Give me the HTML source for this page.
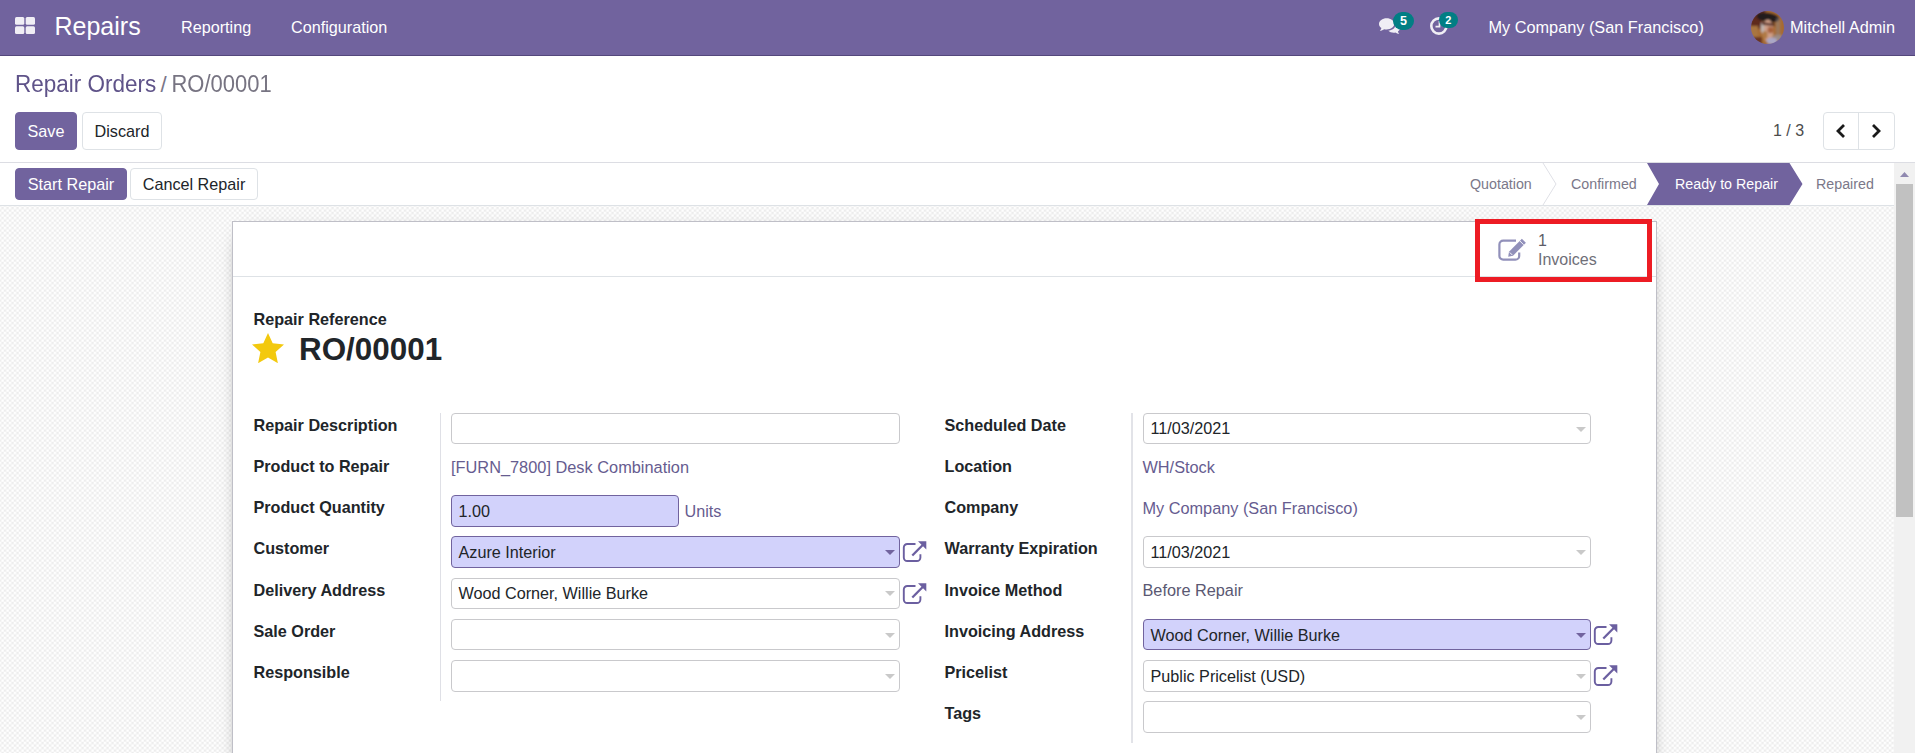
<!DOCTYPE html>
<html>
<head>
<meta charset="utf-8">
<title>Odoo - RO/00001</title>
<style>
*{box-sizing:border-box;margin:0;padding:0}
html,body{width:1915px;height:753px;overflow:hidden;background:#fff}
body{font-family:"Liberation Sans",sans-serif;font-size:16px;color:#212529;position:relative}
.abs{position:absolute}
.t{position:absolute;white-space:nowrap;line-height:1}
/* navbar */
#nav{left:0;top:0;width:1915px;height:56px;background:#71639e;border-bottom:1px solid #54477c}
#nav .t{color:#fff}
.badge{position:absolute;background:#017e84;color:#fff;font-weight:bold;font-size:12px;border-radius:9px;text-align:center;line-height:18px;height:18px}
/* control panel */
.btn{position:absolute;border-radius:4px;font-size:16.2px;text-align:center;white-space:nowrap}
.btn-p{background:#71639e;color:#fff;border:1px solid #71639e}
.btn-s{background:#fff;color:#212529;border:1px solid #dee2e6}
/* content */
#content{left:0;top:163px;width:1894px;height:590px;overflow:hidden;
 background:#f5f5f5}
#statusbar{left:0;top:0;width:1894px;height:43px;background:#fff;border-bottom:1px solid #dee2e6}
#sheet{left:232px;top:58px;width:1425px;height:1600px;background:#fff;border:1px solid #bfbfc7;box-shadow:0 5px 20px -14px #000}
.lbl{position:absolute;font-weight:bold;font-size:16.2px;color:#212529;white-space:nowrap;line-height:1}
.inp{position:absolute;height:31px;border:1px solid #c9c9cc;border-radius:4px;background:#fff;font-size:16.2px;line-height:29px;padding-left:6.5px;color:#212529;white-space:nowrap}
.req{background:#d2d2fb;border-color:#71639e}
.h32{height:32px;line-height:30px}
.val{position:absolute;font-size:16.2px;white-space:nowrap;line-height:1;color:#665c90}
.caret{position:absolute;width:0;height:0;border-left:5px solid transparent;border-right:5px solid transparent;border-top:5px solid #c9c9c9}
.caret.p{border-top-color:#71639e}
.vsep{position:absolute;width:1px;background:#dfe0e6}
</style>
</head>
<body>

<!-- NAVBAR -->
<div id="nav" class="abs">
  <svg class="abs" style="left:15px;top:17px" width="20" height="17" viewBox="0 0 20 17"><g fill="#f0eef5"><rect x="0" y="0" width="9.3" height="7.8" rx="1.5"/><rect x="10.7" y="0" width="9.3" height="7.8" rx="1.5"/><rect x="0" y="9.2" width="9.3" height="7.8" rx="1.5"/><rect x="10.7" y="9.2" width="9.3" height="7.8" rx="1.5"/></g></svg>
  <div class="t" style="left:54.5px;top:14px;font-size:25px">Repairs</div>
  <div class="t" style="left:181px;top:19px;font-size:16.2px">Reporting</div>
  <div class="t" style="left:291px;top:19px;font-size:16.2px">Configuration</div>

  <!-- comments icon -->
  <svg class="abs" style="left:1379px;top:18px" width="21" height="17.500" viewBox="0 0 22 18"><g fill="#f0eef5"><path d="M8 0C3.6 0 0 2.7 0 6c0 1.7 1 3.2 2.500 4.300C2.300 11.500 1.600 12.500 .8 13.200c1.800-.1 3.500-.8 4.700-1.700.8.200 1.600.300 2.500.300 4.400 0 8-2.600 8-5.900S12.400 0 8 0z"/><path d="M17.300 7.300c-.5 3-3.500 5.300-7.500 5.800 1.300 1.300 3.300 2.100 5.600 2.100.7 0 1.300-.1 1.900-.2 1 .8 2.400 1.400 3.900 1.500-.7-.6-1.200-1.400-1.400-2.400C21.200 13.200 22 12 22 10.700c0-1.600-1.900-3-4.700-3.400z"/></g></svg>
  <div class="badge" style="left:1393px;top:11.500px;width:21px;height:18.500px;line-height:18.500px;font-size:12.500px">5</div>
  <!-- activity clock -->
  <svg class="abs" style="left:1429px;top:16px" width="20" height="20" viewBox="0 0 20 20"><circle cx="9.900" cy="10" r="7.600" fill="none" stroke="#f0eef5" stroke-width="2.600"/><path d="M10.500 5v5.600h-4" fill="none" stroke="#f0eef5" stroke-width="1.700"/></svg>
  <div class="badge" style="left:1438.500px;top:11.500px;width:19.700px;height:16.500px;line-height:16.500px;font-size:11px">2</div>

  <div class="t" style="left:1488.5px;top:19px;font-size:16.3px">My Company (San Francisco)</div>
  <!-- avatar -->
  <svg class="abs" style="left:1751px;top:10.500px" width="33" height="33" viewBox="0 0 33 33">
    <defs><clipPath id="av"><circle cx="16.500" cy="16.500" r="16.500"/></clipPath><filter id="avb" x="-10%" y="-10%" width="120%" height="120%"><feGaussianBlur stdDeviation="1"/></filter></defs>
    <g clip-path="url(#av)"><g filter="url(#avb)">
      <rect x="-3" y="-3" width="39" height="39" fill="#a66a32"/>
      <path d="M-2 -2h17l-6 20H-2z" fill="#5e2a1c"/>
      <rect x="-2" y="15" width="9" height="12" fill="#a87540"/>
      <rect x="2" y="26" width="9" height="8" fill="#6b3520"/>
      <ellipse cx="17" cy="6.500" rx="11.500" ry="4.800" transform="rotate(8 17 6.500)" fill="#231a1b"/>
      <ellipse cx="16.800" cy="19.500" rx="5.600" ry="11" fill="#cf9f88"/>
      <ellipse cx="11.500" cy="16.500" rx="1.800" ry="5.500" fill="#bdb3ae"/>
      <path d="M11 11.200l13 1.500v2.300l-13-1.300z" fill="#4a2320"/>
      <ellipse cx="19.500" cy="19" rx="3" ry="3.200" fill="#a8623c"/>
      <ellipse cx="14" cy="24" rx="2.500" ry="4" fill="#b07a45"/>
      <rect x="25" y="7" width="4" height="22" fill="#8c8a8e" opacity=".45"/>
      <rect x="22" y="24" width="9" height="5" fill="#9b9aa5" opacity=".6"/>
      <ellipse cx="21" cy="30" rx="5.500" ry="3.500" fill="#aaa7c6"/>
    </g></g>
  </svg>
  <div class="t" style="left:1790px;top:19px;font-size:16.3px">Mitchell Admin</div>
</div>

<!-- CONTROL PANEL -->
<div class="t" style="left:15px;top:74px;font-size:22.5px;color:#5f5389;transform:scaleY(1.05);transform-origin:0 84.600%">Repair Orders</div>
<div class="t" style="left:160.500px;top:73.500px;font-size:22.2px;color:#7a7688">/</div>
<div class="t" style="left:171.400px;top:73.500px;font-size:22px;color:#777482;transform:scaleY(1.06);transform-origin:0 84.600%">RO/00001</div>
<div class="btn btn-p" style="left:15px;top:112px;width:62px;height:38px;line-height:37px">Save</div>
<div class="btn btn-s" style="left:82px;top:112px;width:80px;height:38px;line-height:37px">Discard</div>
<div class="t" style="left:1773px;top:123px;font-size:16px;color:#4c4c4c">1 / 3</div>
<div class="abs" style="left:1823px;top:112px;width:72px;height:38px;border:1px solid #dee2e6;border-radius:4px;background:#fff"></div>
<div class="abs" style="left:1858px;top:113px;width:1px;height:36px;background:#dee2e6"></div>
<svg class="abs" style="left:1834px;top:123px" width="14" height="16" viewBox="0 0 14 16"><path d="M10 2L4 8l6 6" fill="none" stroke="#1a1a1a" stroke-width="2.800"/></svg>
<svg class="abs" style="left:1869px;top:123px" width="14" height="16" viewBox="0 0 14 16"><path d="M4 2l6 6-6 6" fill="none" stroke="#1a1a1a" stroke-width="2.800"/></svg>
<div class="abs" style="left:0;top:162px;width:1915px;height:1px;background:#dcdde3"></div>

<!-- SCROLLBAR -->
<div class="abs" style="left:1894px;top:163px;width:21px;height:590px;background:#f1f1f1"></div>
<div class="abs" style="left:1896px;top:184px;width:17px;height:333px;background:#c1c1c1"></div>
<svg class="abs" style="left:1900px;top:172px" width="9" height="5" viewBox="0 0 9 5"><path d="M0 5L4.500 0 9 5z" fill="#9089b0"/></svg>

<!-- CONTENT -->
<div id="content" class="abs">
  <svg class="abs" style="left:0;top:0" width="1894" height="590"><defs><pattern id="chk" width="5" height="5" patternUnits="userSpaceOnUse" patternTransform="translate(3.75 3.75)"><rect width="5" height="5" fill="#ededed"/><rect x="0" y="0" width="2.500" height="2.500" fill="#fff"/><rect x="2.500" y="2.500" width="2.500" height="2.500" fill="#fff"/></pattern></defs><rect width="1894" height="590" fill="url(#chk)"/></svg>
  <div id="statusbar" class="abs">
    <div class="btn btn-p" style="left:15px;top:5px;width:112px;height:32px;line-height:31px">Start Repair</div>
    <div class="btn btn-s" style="left:130px;top:5px;width:128px;height:32px;line-height:31px">Cancel Repair</div>
    <svg class="abs" style="left:1440px;top:0" width="454" height="42" viewBox="0 0 454 42">
      <path d="M103 0l13 21-13 21" fill="none" stroke="#dfe0e6" stroke-width="1"/>
      <path d="M207 0h142.500l13 21-13 21H207l12-21z" fill="#71639e"/>
    </svg>
    <div class="t" style="left:1470px;top:14px;font-size:14.25px;color:#7b7889">Quotation</div>
    <div class="t" style="left:1571px;top:14px;font-size:14.25px;color:#7b7889">Confirmed</div>
    <div class="t" style="left:1675px;top:14px;font-size:14.25px;color:#fff">Ready to Repair</div>
    <div class="t" style="left:1816px;top:14px;font-size:14.25px;color:#7b7889">Repaired</div>
  </div>

  <div id="sheet" class="abs"></div>
</div>

<!-- SHEET CONTENT (absolute page coords) -->
<div class="abs" style="left:233px;top:276px;width:1423px;height:1px;background:#dee2e6"></div>
<!-- red highlight -->
<div class="abs" style="left:1475px;top:219px;width:177px;height:63px;border:5px solid #ed1c24"></div>
<!-- invoice button -->
<svg class="abs" style="left:1498px;top:238px" width="29" height="24" viewBox="0 0 29 24">
  <path d="M18 2.700H5.200A3.800 3.800 0 0 0 1.400 6.500v11.400a3.800 3.800 0 0 0 3.800 3.800h12.200a3.800 3.800 0 0 0 3.800-3.800V14.500" fill="none" stroke="#9190ba" stroke-width="2.200"/>
  <path d="M10.200 18.700l.8-5 12.900-12.900 4 4L15 17.700z" fill="#9190ba"/>
  <path d="M11.700 14.400l2.600 2.600" stroke="#fff" stroke-width=".9"/>
  <path d="M21.700 2.800l4 4" stroke="#fff" stroke-width=".9"/>
</svg>
<div class="t" style="left:1538px;top:233px;font-size:16px;color:#5d5d68">1</div>
<div class="t" style="left:1538px;top:252px;font-size:16px;color:#6f6f78">Invoices</div>

<!-- title -->
<div class="lbl" style="left:253.5px;top:311px">Repair Reference</div>
<svg class="abs" style="left:252px;top:333px" width="32" height="30" viewBox="0 0 32 30"><path d="M16 0l4.700 10.300 11.300 1.200-8.400 7.600 2.300 11.100L16 24.600 6.100 30.200l2.300-11.100L0 11.500l11.300-1.200z" fill="#f3c90e"/></svg>
<div class="t" style="left:299px;top:334px;font-size:31.4px;font-weight:bold;color:#212529">RO/00001</div>

<!-- LEFT GROUP -->
<div class="vsep" style="left:440px;top:413px;height:288px"></div>
<div class="lbl" style="left:253.5px;top:417px">Repair Description</div>
<div class="lbl" style="left:253.5px;top:458px">Product to Repair</div>
<div class="lbl" style="left:253.5px;top:499px">Product Quantity</div>
<div class="lbl" style="left:253.5px;top:540px">Customer</div>
<div class="lbl" style="left:253.5px;top:582px">Delivery Address</div>
<div class="lbl" style="left:253.5px;top:623px">Sale Order</div>
<div class="lbl" style="left:253.5px;top:664px">Responsible</div>

<div class="inp" style="left:451px;top:413px;width:449px"></div>
<div class="val" style="left:451px;top:459px;font-size:16.35px">[FURN_7800] Desk Combination</div>
<div class="inp req h32" style="left:451px;top:495px;width:228px">1.00</div>
<div class="val" style="left:684.5px;top:503px">Units</div>
<div class="inp req h32" style="left:451px;top:536px;width:449px">Azure Interior</div>
<div class="caret p" style="left:885px;top:550px"></div>
<div class="inp" style="left:451px;top:578px;width:449px">Wood Corner, Willie Burke</div>
<div class="caret" style="left:885px;top:591px"></div>
<div class="inp" style="left:451px;top:619px;width:449px"></div>
<div class="caret" style="left:885px;top:633px"></div>
<div class="inp h32" style="left:451px;top:660px;width:449px"></div>
<div class="caret" style="left:885px;top:674px"></div>

<!-- RIGHT GROUP -->
<div class="vsep" style="left:1131px;top:413px;height:330px;width:2px;background:#e2e3e8"></div>
<div class="lbl" style="left:944.5px;top:417px">Scheduled Date</div>
<div class="lbl" style="left:944.5px;top:458px">Location</div>
<div class="lbl" style="left:944.5px;top:499px">Company</div>
<div class="lbl" style="left:944.5px;top:540px">Warranty Expiration</div>
<div class="lbl" style="left:944.5px;top:582px">Invoice Method</div>
<div class="lbl" style="left:944.5px;top:623px">Invoicing Address</div>
<div class="lbl" style="left:944.5px;top:664px">Pricelist</div>
<div class="lbl" style="left:944.5px;top:705px">Tags</div>

<div class="inp" style="left:1143px;top:413px;width:448px">11/03/2021</div>
<div class="caret" style="left:1576px;top:427px"></div>
<div class="val" style="left:1142.5px;top:459px;font-size:16.3px">WH/Stock</div>
<div class="val" style="left:1142.5px;top:500px;font-size:16.3px">My Company (San Francisco)</div>
<div class="inp h32" style="left:1143px;top:536px;width:448px">11/03/2021</div>
<div class="caret" style="left:1576px;top:550px"></div>
<div class="val" style="left:1142.5px;top:582px;color:#5a5872;font-size:16.3px">Before Repair</div>
<div class="inp req" style="left:1143px;top:619px;width:448px;line-height:31px">Wood Corner, Willie Burke</div>
<div class="caret p" style="left:1576px;top:633px"></div>
<div class="inp h32" style="left:1143px;top:660px;width:448px">Public Pricelist (USD)</div>
<div class="caret" style="left:1576px;top:674px"></div>
<div class="inp h32" style="left:1143px;top:701px;width:448px"></div>
<div class="caret" style="left:1576px;top:715px"></div>

<!-- external link icons -->
<svg width="0" height="0" style="position:absolute"><defs>
  <g id="ext">
    <path d="M13.500 3H5.300A3.500 3.500 0 0 0 1.800 6.500v10A3.500 3.500 0 0 0 5.300 20h9.600a3.500 3.500 0 0 0 3.500-3.500V13.300" fill="none" stroke="#6b5fa0" stroke-width="1.900"/>
    <path d="M10.300 14.500L21.500 3.200" stroke="#6b5fa0" stroke-width="2.300" fill="none"/>
    <path d="M16 .3h8.300v8.300z" fill="#6b5fa0"/>
  </g>
</defs></svg>
<svg class="abs" style="left:902px;top:541px" width="25" height="21" viewBox="0 0 25 21"><use href="#ext"/></svg>
<svg class="abs" style="left:902px;top:583px" width="25" height="21" viewBox="0 0 25 21"><use href="#ext"/></svg>
<svg class="abs" style="left:1593px;top:624px" width="25" height="21" viewBox="0 0 25 21"><use href="#ext"/></svg>
<svg class="abs" style="left:1593px;top:665px" width="25" height="21" viewBox="0 0 25 21"><use href="#ext"/></svg>

</body>
</html>
